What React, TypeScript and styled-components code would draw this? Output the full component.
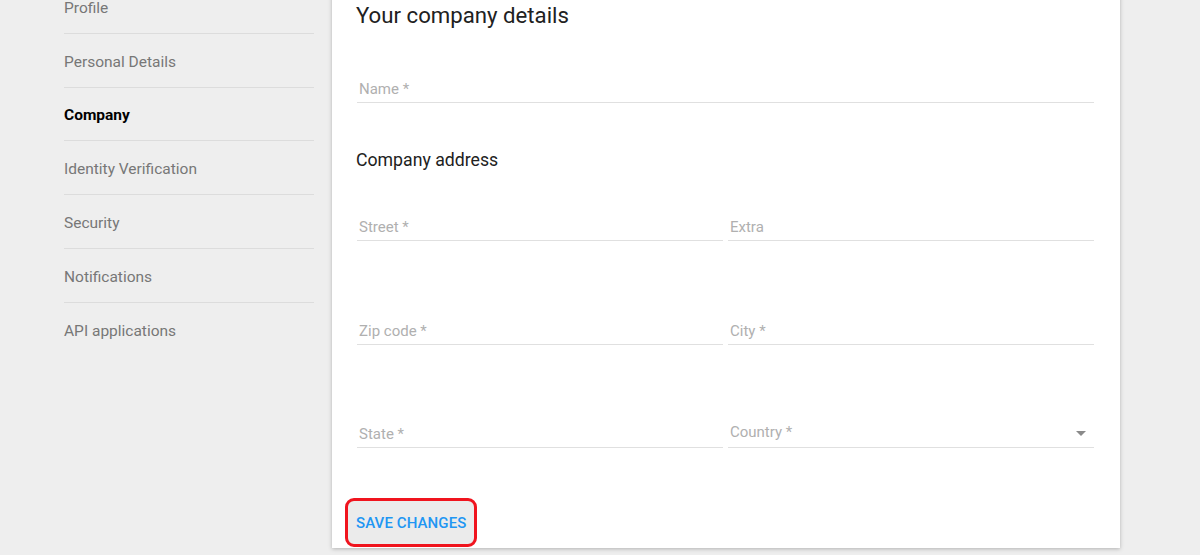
import React from 'react'
import styled, { createGlobalStyle } from 'styled-components'

const GlobalStyle = createGlobalStyle`
  html, body {
    margin: 0;
    padding: 0;
    background: #eeeeee;
    font-family: Roboto, 'Noto Sans', sans-serif;
    overflow: hidden;
  }
`

const Page = styled.div`
  display: flex;
  align-items: flex-start;
  gap: 18px;
  padding-left: 64px;
  margin-top: -20px;
`

const SideNav = styled.nav`
  width: 250px;
  display: flex;
  flex-direction: column;
`

const NavItem = styled.div<{ $active?: boolean }>`
  height: 53.8px;
  display: flex;
  align-items: center;
  border-bottom: 1px solid #dcdcdc;
  font-size: 15.5px;
  color: ${(p) => (p.$active ? '#000' : '#777')};
  font-weight: ${(p) => (p.$active ? 700 : 400)};
  padding-top: 3px;
  box-sizing: border-box;
  &:last-child {
    border-bottom: none;
  }
`

const Card = styled.section`
  width: 788px;
  background: #fff;
  box-shadow: 0 1px 4px rgba(0, 0, 0, 0.25);
  padding: 21px 26px 1px 25px;
  box-sizing: border-box;
  margin-bottom: 8px;
`

const Title = styled.h2`
  margin: 0;
  font-size: 22.2px;
  line-height: 28px;
  font-weight: 400;
  color: #212121;
  margin-left: -1px;
`

const SubTitle = styled.h3`
  margin: 46px 0 0 -1px;
  font-size: 17.7px;
  line-height: 22px;
  font-weight: 400;
  color: #212121;
`

const Row = styled.div<{ $gap: number }>`
  display: grid;
  grid-template-columns: 1fr 1fr;
  column-gap: 5px;
  margin-top: ${(p) => p.$gap}px;
`

const Field = styled.div<{ $gap?: number }>`
  position: relative;
  margin-top: ${(p) => p.$gap ?? 0}px;
  padding: 5px 2px 4px;
  line-height: 18px;
  font-size: 15px;
  color: #b0b0b0;
  border-bottom: 1px solid #e0e0e0;
`

const SelectLabel = styled.span`
  position: relative;
  top: -2px;
`

const Arrow = styled.span`
  position: absolute;
  right: 8px;
  top: 11px;
  width: 0;
  height: 0;
  border-left: 5px solid transparent;
  border-right: 5px solid transparent;
  border-top: 5px solid #8a8a8a;
`

const SaveButton = styled.button`
  margin: 50px 0 0 -12px;
  height: 49px;
  padding: 0 8px;
  border: 3px solid #f0141e;
  border-radius: 9px;
  background: #ebebeb;
  color: #2196f3;
  font-family: Roboto, sans-serif;
  font-size: 15px;
  font-weight: 500;
  letter-spacing: 0.1px;
  text-transform: uppercase;
  cursor: pointer;
`

const navItems = [
  'Profile',
  'Personal Details',
  'Company',
  'Identity Verification',
  'Security',
  'Notifications',
  'API applications',
]

export default function App() {
  return (
    <>
      <GlobalStyle />
      <Page>
        <SideNav>
          {navItems.map((item) => (
            <NavItem key={item} $active={item === 'Company'}>
              {item}
            </NavItem>
          ))}
        </SideNav>
        <Card>
          <Title>Your company details</Title>
          <Field $gap={46}>Name *</Field>
          <SubTitle>Company address</SubTitle>
          <Row $gap={42}>
            <Field>Street *</Field>
            <Field>Extra</Field>
          </Row>
          <Row $gap={76}>
            <Field>Zip code *</Field>
            <Field>City *</Field>
          </Row>
          <Row $gap={75}>
            <Field>State *</Field>
            <Field>
              <SelectLabel>Country *</SelectLabel>
              <Arrow />
            </Field>
          </Row>
          <SaveButton>Save changes</SaveButton>
        </Card>
      </Page>
    </>
  )
}
